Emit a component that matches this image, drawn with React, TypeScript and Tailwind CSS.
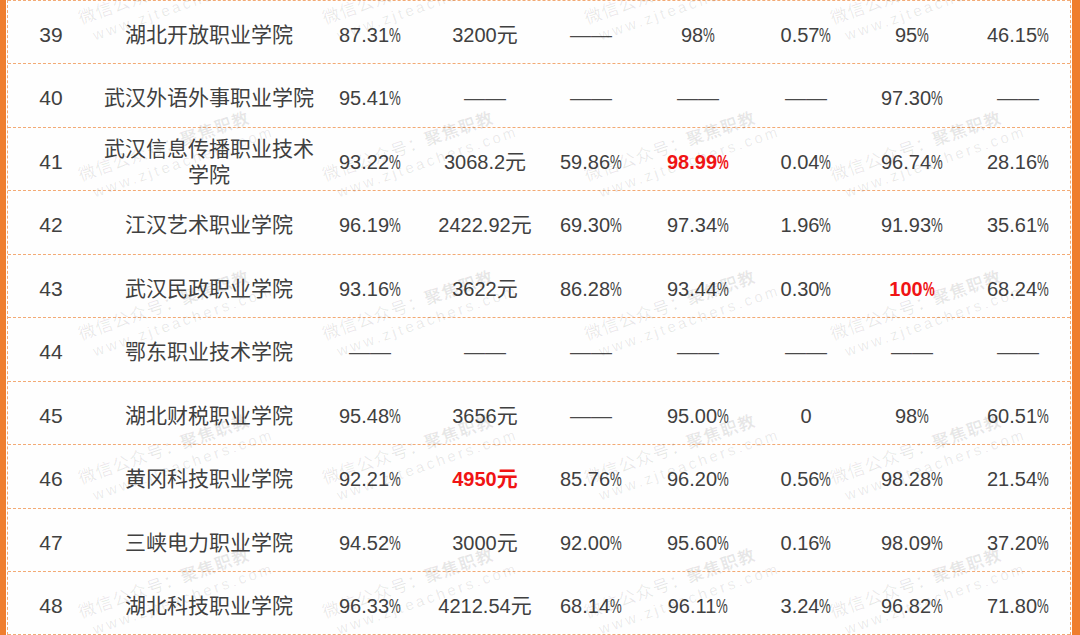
import React from "react";

type Cell = string | { v: string; red: true };

const rows: { no: string; name: string; cells: Cell[] }[] = [
  { no: "39", name: "湖北开放职业学院", cells: ["87.31%", "3200元", "——", "98%", "0.57%", "95%", "46.15%"] },
  { no: "40", name: "武汉外语外事职业学院", cells: ["95.41%", "——", "——", "——", "——", "97.30%", "——"] },
  { no: "41", name: "武汉信息传播职业技术学院", cells: ["93.22%", "3068.2元", "59.86%", { v: "98.99%", red: true }, "0.04%", "96.74%", "28.16%"] },
  { no: "42", name: "江汉艺术职业学院", cells: ["96.19%", "2422.92元", "69.30%", "97.34%", "1.96%", "91.93%", "35.61%"] },
  { no: "43", name: "武汉民政职业学院", cells: ["93.16%", "3622元", "86.28%", "93.44%", "0.30%", { v: "100%", red: true }, "68.24%"] },
  { no: "44", name: "鄂东职业技术学院", cells: ["——", "——", "——", "——", "——", "——", "——"] },
  { no: "45", name: "湖北财税职业学院", cells: ["95.48%", "3656元", "——", "95.00%", "0", "98%", "60.51%"] },
  { no: "46", name: "黄冈科技职业学院", cells: ["92.21%", { v: "4950元", red: true }, "85.76%", "96.20%", "0.56%", "98.28%", "21.54%"] },
  { no: "47", name: "三峡电力职业学院", cells: ["94.52%", "3000元", "92.00%", "95.60%", "0.16%", "98.09%", "37.20%"] },
  { no: "48", name: "湖北科技职业学院", cells: ["96.33%", "4212.54元", "68.14%", "96.11%", "3.24%", "96.82%", "71.80%"] },
];

const rowHeights = [
  "h-[63px]",
  "h-[64px]",
  "h-[63px]",
  "h-[64px]",
  "h-[63px]",
  "h-[64px]",
  "h-[63px]",
  "h-[64px]",
  "h-[63px]",
  "h-[64px] border-b",
];

const marks: { x: number; y: number }[] = [];
const mxs = [82, 326, 588, 834];
const mys = [20, 177, 336, 480, 614];
for (const y of mys) for (const x of mxs) marks.push({ x, y });

function Value({ c }: { c: Cell }) {
  const red = typeof c !== "string";
  const v = typeof c === "string" ? c : c.v;
  const color = red ? "text-[#f01414] font-bold" : "text-[#404040]";
  if (v === "——") {
    return <span className="text-[21px] text-[#4a4a4a]">——</span>;
  }
  if (v.endsWith("%")) {
    return (
      <span className={`text-[20px] whitespace-nowrap ${color}`}>
        {v.slice(0, -1)}
        <span className="inline-block w-[12px] origin-left scale-x-[0.66]">%</span>
      </span>
    );
  }
  if (v.endsWith("元")) {
    return (
      <span className={`text-[20px] whitespace-nowrap ${color}`}>
        {v.slice(0, -1)}
        <span className="text-[21px]">元</span>
      </span>
    );
  }
  return <span className={`text-[20px] ${color}`}>{v}</span>;
}

export default function App() {
  return (
    <div className="relative w-[1080px] h-[635px] overflow-hidden bg-[#fefefe] font-['Liberation_Sans','Noto_Sans_CJK_SC',sans-serif]">
      <div className="flex h-full">
        <div className="w-[6px] bg-[#ef7e2e]" />
        <div className="ml-[1px] flex-1 border-x border-dashed border-[#f3aa74]">
          {rows.map((r, i) => (
            <div
              key={r.no}
              className={`grid grid-cols-[86px_230px_92px_138px_74px_140px_76px_136px_76px_1fr] items-center border-t border-dashed border-[#f3aa74] pt-[5px] ${rowHeights[i]}`}
            >
              <div className="text-center text-[21px] text-[#404040]">{r.no}</div>
              <div className="text-center text-[21px] leading-[26px] text-[#404040] px-[2px]">{r.name}</div>
              {r.cells.map((c, j) => (
                <div key={j} className="text-center">
                  <Value c={c} />
                </div>
              ))}
              <div />
            </div>
          ))}
        </div>
        <div className="ml-[1px] w-[8px] bg-[#ef7e2e]" />
      </div>
      <div className="pointer-events-none absolute inset-0">
        {marks.map((m, i) => (
          <div
            key={i}
            className="absolute origin-top-left rotate-[-19deg] whitespace-nowrap text-[rgba(0,0,0,0.09)]"
            style={{ left: m.x - 6, top: m.y - 10 }}
          >
            <div className="text-[17px] leading-[20px] tracking-[1px]">
              微信公众号：<span className="font-bold">聚焦职教</span>
            </div>
            <div className="pl-[8px] text-[15px] leading-[20px] tracking-[3px]">www.zjteachers.com</div>
          </div>
        ))}
      </div>
    </div>
  );
}
